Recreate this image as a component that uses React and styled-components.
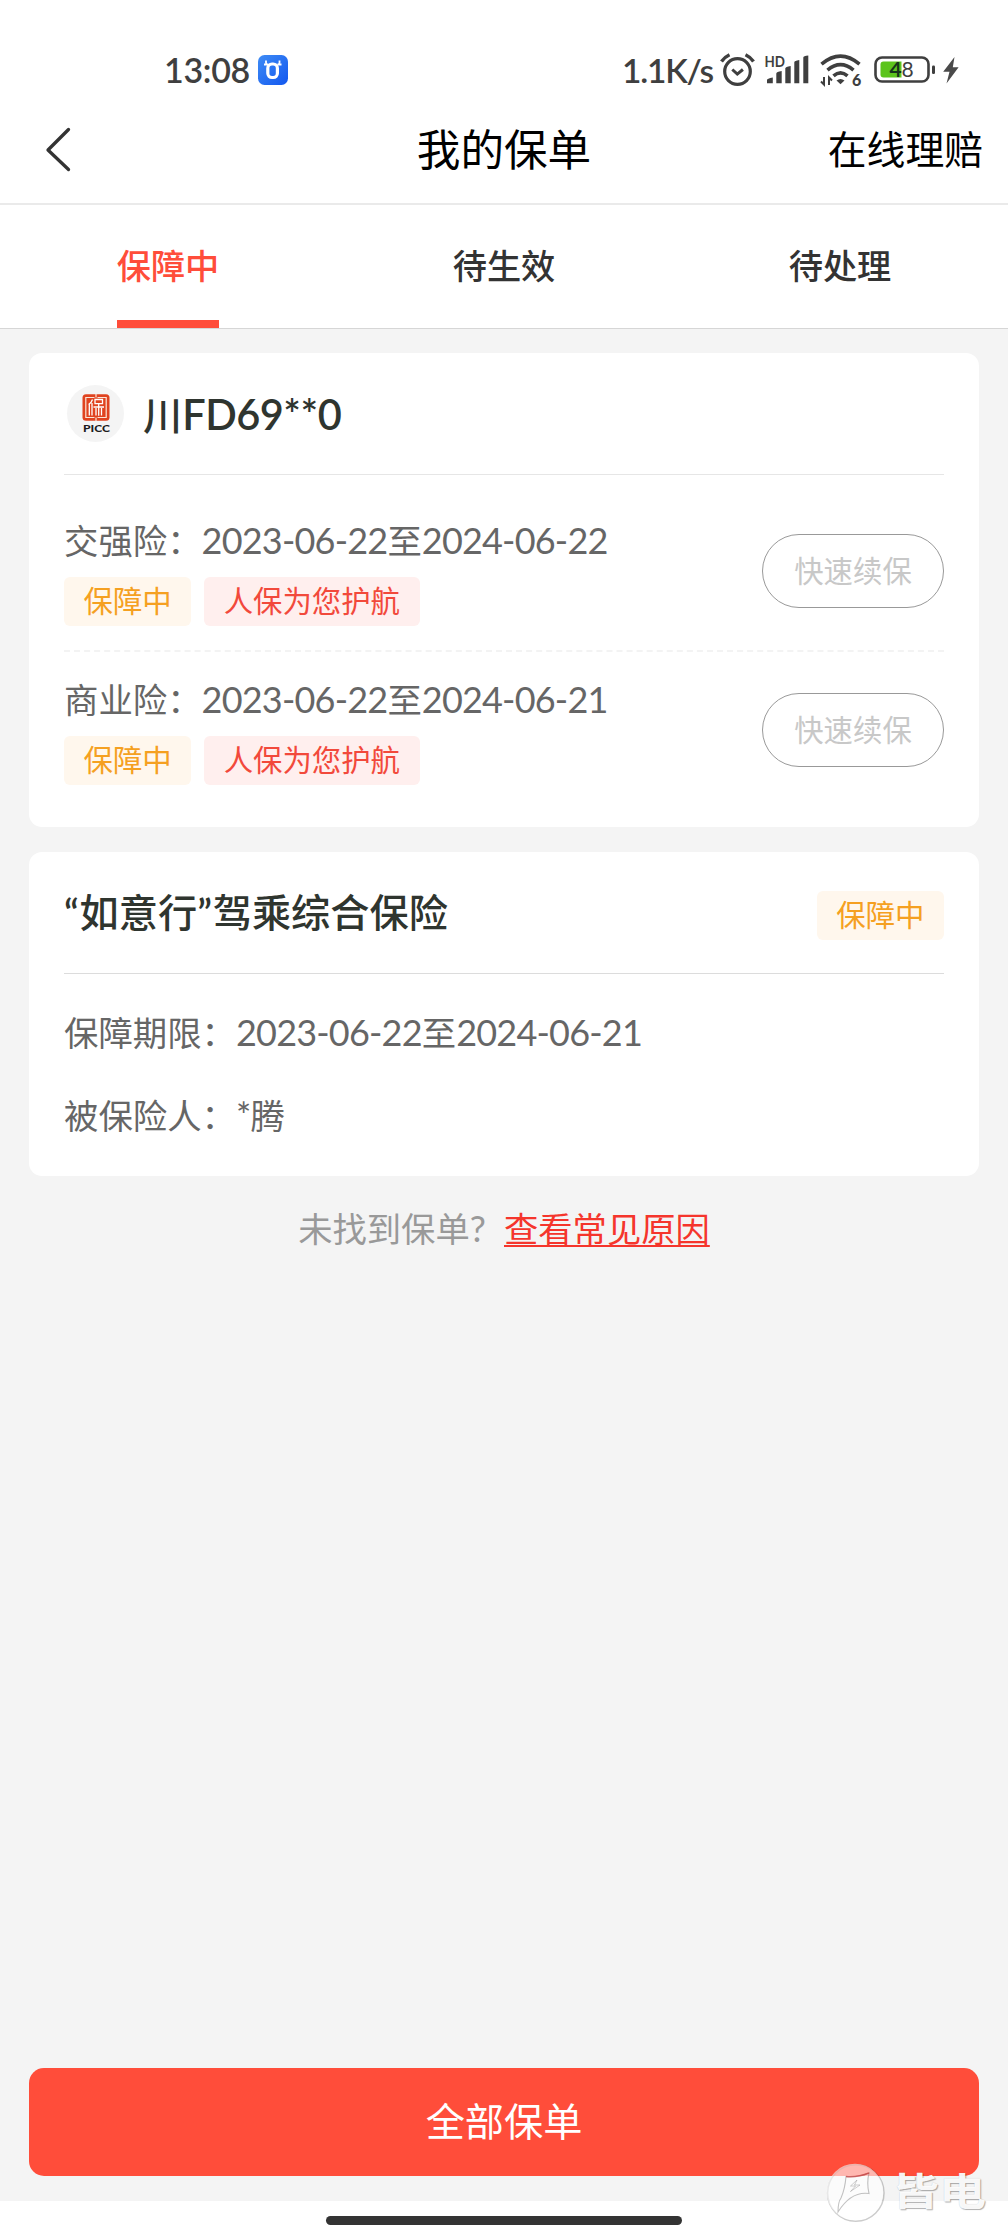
import { useState } from 'react';
import styled, { createGlobalStyle } from 'styled-components';

const TABS = ['保障中', '待生效', '待处理'];

const POLICIES = [
  { name: '交强险', start: '2023-06-22', end: '2024-06-22' },
  { name: '商业险', start: '2023-06-22', end: '2024-06-21' },
];

const AppBadge = () => (
  <svg width="30" height="30" viewBox="0 0 30 30">
    <defs>
      <linearGradient id="badge" x1="0" y1="0" x2="1" y2="1">
        <stop offset="0" stopColor="#3f8cf5" />
        <stop offset="1" stopColor="#1257ef" />
      </linearGradient>
    </defs>
    <rect width="30" height="30" rx="6.5" fill="url(#badge)" />
    <rect x="9.8" y="9" width="9.6" height="13.5" rx="4.2" fill="none" stroke="#fff" strokeWidth="3.2" />
    <path d="M8 5.500v2.200q0 1.600 2 2M21.500 5.500v2.200q0 1.600-2 2M6 9.500h4M19.500 9.500h4" fill="none" stroke="#fff" strokeWidth="1.8" />
  </svg>
);

const AlarmIcon = () => (
  <svg width="36" height="34" viewBox="0 0 36 34" fill="none" stroke="#3f3f3f">
    <circle cx="17.5" cy="18.5" r="12.8" strokeWidth="3.2" />
    <path d="M12.3 16.500l5 4.600 5.600-4.600" strokeWidth="3" />
    <path d="M1.500 8.500q3-4.500 8-6.800M33.500 8.500q-3-4.500-8-6.800" strokeWidth="3.4" />
  </svg>
);

const SignalIcon = () => (
  <svg width="46" height="34" viewBox="0 0 46 34" fill="#3f3f3f">
    <text x="0.5" y="13.5" fontFamily="Lato, sans-serif" fontWeight="700" fontSize="14.5" textLength="20.5" lengthAdjust="spacingAndGlyphs">HD</text>
    <path d="M3 30.300v-3.200q0-1.600 5.800-2.600v5.800zM12.300 30.300V20.500q0-1.600 5.400-2.400v12.200zM21.300 30.300V15.300q0-1.600 5.400-2.400v17.400zM30.300 30.300V9.200q0-1.400 5-2.200v23.300zM39.300 30.300V4.400q0-1.400 5-2v27.900z" />
  </svg>
);

const WifiIcon = () => (
  <svg width="42" height="34" viewBox="0 0 42 34" fill="none" stroke="#3f3f3f" strokeWidth="3.6">
    <path d="M1.500 11.200q19-16 38 0M7.500 17.200q13-11 26 0M13.500 22.800q7-6 14 0" />
    <path d="M16.500 27.500q4-3 8 0l-4 3.800z" fill="#3f3f3f" stroke="none" />
    <path d="M4 24v7.500l-3-3M9 32v-7.500l3 3" strokeWidth="2" />
    <text x="32" y="33" fontFamily="Lato, sans-serif" fontWeight="900" fontSize="16" fill="#3f3f3f" stroke="none">6</text>
  </svg>
);

const BatteryIcon = () => (
  <svg width="64" height="30" viewBox="0 0 64 30">
    <rect x="2.5" y="2.5" width="53" height="24" rx="6.5" fill="none" stroke="#3f3f3f" strokeWidth="2.6" />
    <path d="M10.500 6.500h18v16h-18q-3 0-3-3v-10q0-3 3-3z" fill="#5cc41c" />
    <rect x="59" y="10.500" width="3" height="8.5" rx="1.2" fill="#3f3f3f" />
    <text x="16.5" y="22" fontFamily="Lato, sans-serif" fontSize="21" fontWeight="700" fill="#16351a">4</text>
    <text x="28.5" y="22" fontFamily="Lato, sans-serif" fontSize="21" fill="#3f3f3f">8</text>
  </svg>
);

const BoltIcon = () => (
  <svg width="16" height="28" viewBox="0 0 16 28" fill="#4a4a4a">
    <path d="M11.500 1L.2 15.800h6.300L3.500 27.500 15.600 11.300H9.800z" />
  </svg>
);

const BackIcon = () => (
  <svg width="30" height="46" viewBox="0 0 30 46" fill="none" stroke="#333" strokeWidth="3.3" strokeLinecap="round" strokeLinejoin="round">
    <path d="M24.500 3.500L4 24l20.500 19.500" />
  </svg>
);

const PiccLogo = () => (
  <svg width="57" height="57" viewBox="0 0 57 57">
    <circle cx="28.5" cy="28.5" r="28.5" fill="#f4f4f4" />
    <rect x="15.5" y="9.3" width="27" height="26.4" rx="3.5" fill="#e0431f" />
    <path d="M27.500 12.500H18.800v20h8.700M30.500 12.500h8.700v20h-8.700M29 9v3.500M29 32.500V36" fill="none" stroke="#fbe5d8" strokeWidth="1.2" />
    <path d="M25.500 14.500q-1 3.500-4 5M22.300 19v11.500M25 18v12.500M28 14.500h7.500v4.200H28zM26.500 22H37M31.700 18.700v12M29 23v7.500M34.500 23v7.500" fill="none" stroke="#fff" strokeWidth="1.3" />
    <text x="16" y="46.8" fontFamily="Lato, sans-serif" fontWeight="900" fontSize="10.2" fill="#1c1c1c" textLength="27" lengthAdjust="spacingAndGlyphs">PICC</text>
  </svg>
);

const WatermarkLogo = () => (
  <svg width="60" height="60" viewBox="0 0 60 60">
    <circle cx="30.8" cy="31" r="28.2" fill="none" stroke="#000" strokeOpacity="0.2" strokeWidth="1.5" />
    <circle cx="30" cy="30" r="28.3" fill="#fff" fillOpacity="0.6" />
    <path d="M21 14.500q12 1 23-3.500-2.500 10 0 20.500Q26 29 13 50q0-10 3-14 4-9 5-21.500z" fill="#fff" fillOpacity="0.3" stroke="#777" strokeOpacity="0.45" strokeWidth="1.1" />
    <path d="M21 14.500q12 1 23-3.500" fill="none" stroke="#c22" strokeOpacity="0.6" strokeWidth="1.5" />
    <path d="M32 18l-6.500 6h5l-5 5.500 9.500-6.500h-5.500z" fill="none" stroke="#888" strokeOpacity="0.4" />
  </svg>
);

const App = () => {
  const [activeTab, setActiveTab] = useState(0);

  return (
    <Page>
      <GlobalStyle />
      <StatusBar>
        <StatusGroup>
          <StatusText>13:08</StatusText>
          <AppBadge />
        </StatusGroup>
        <StatusGroup>
          <SpeedText>1.1K/s</SpeedText>
          <StatusIcons>
            <AlarmIcon />
            <SignalIcon />
            <WifiIcon />
            <BatteryIcon />
            <BoltIcon />
          </StatusIcons>
        </StatusGroup>
      </StatusBar>

      <Header>
        <BackButton><BackIcon /></BackButton>
        <Title>我的保单</Title>
        <HeaderLink>在线理赔</HeaderLink>
      </Header>

      <TabBar>
        {TABS.map((tab, index) => (
          <TabItem key={tab} onClick={() => setActiveTab(index)}>
            <TabLabel $active={index === activeTab}>{tab}</TabLabel>
          </TabItem>
        ))}
      </TabBar>

      <Content>
        <Card $height={474}>
          <CardHeader>
            <Plate>
              <PiccLogo />
              <CardTitle>川<PlateNumber>FD69**0</PlateNumber></CardTitle>
            </Plate>
          </CardHeader>
          {POLICIES.map((policy) => (
            <PolicyRow key={policy.name}>
              <div>
                <InfoText>
                  {policy.name}：<Num>{policy.start}</Num>至<Num>{policy.end}</Num>
                </InfoText>
                <TagRow>
                  <Tag>保障中</Tag>
                  <Tag $red>人保为您护航</Tag>
                </TagRow>
              </div>
              <RenewButton>快速续保</RenewButton>
            </PolicyRow>
          ))}
        </Card>

        <Card $height={324}>
          <CardHeader $dark>
            <ProductTitle><Quote>“</Quote>如意行<Quote>”</Quote>驾乘综合保险</ProductTitle>
            <Tag>保障中</Tag>
          </CardHeader>
          <Details>
            <InfoText>保障期限：<Num>2023-06-22</Num>至<Num>2024-06-21</Num></InfoText>
            <InfoText>被保险人：<Num>*</Num>腾</InfoText>
          </Details>
        </Card>

        <Hint>
          <span>未找到保单<Num>?</Num></span>
          <HintLink>查看常见原因</HintLink>
        </Hint>
      </Content>

      <Footer>
        <AllButton>全部保单</AllButton>
      </Footer>
      <HomeArea><HomeBar /></HomeArea>

      <Watermark>
        <WatermarkLogo />
        <WatermarkText>皆电</WatermarkText>
      </Watermark>
    </Page>
  );
};

const GlobalStyle = createGlobalStyle`
  * { box-sizing: border-box; }
  body { margin: 0; background: #fff; }
  button { font-family: inherit; background: none; border: none; padding: 0; cursor: pointer; }
  svg { display: block; flex: none; overflow: visible; }
`;

const Page = styled.div`
  position: relative;
  display: flex;
  flex-direction: column;
  width: 1008px;
  height: 2240px;
  overflow: hidden;
  background: #fff;
  font-family: 'Noto Sans CJK SC', sans-serif;
  white-space: nowrap;
`;

const StatusBar = styled.div`
  display: flex;
  justify-content: space-between;
  align-items: center;
  height: 96px;
  padding: 44px 49px 0 164px;
`;

const StatusGroup = styled.div` display: flex; align-items: center; gap: 8px; height: 52px; `;

const StatusText = styled.span`
  width: 86px;
  font: 600 34px/52px Lato, sans-serif;
  letter-spacing: -0.3px;
  color: #3f3f3f;
`;

const SpeedText = styled(StatusText)`
  width: 90px;
  font-size: 33.5px;
  letter-spacing: -1.2px;
`;

const StatusIcons = styled.div`
  display: grid;
  grid-template-columns: 44px 56px 53px 70px 16px;
  align-items: center;
`;

const Header = styled.header`
  display: grid;
  grid-template-columns: 1fr auto 1fr;
  align-items: center;
  height: 109px;
  padding: 0 25px 2px 44px;
  border-bottom: 2px solid #eaeaea;
  color: #000;
`;

const BackButton = styled.button` width: 30px; `;

const Title = styled.h1`
  margin: 0 0 4px -19px;
  font-size: 43.6px;
  font-weight: 400;
  line-height: 60px;
`;

const HeaderLink = styled.button`
  justify-self: end;
  margin-bottom: 4px;
  font-size: 38.8px;
  line-height: 60px;
  color: #000;
`;

const TabBar = styled.nav`
  display: grid;
  grid-template-columns: repeat(3, 1fr);
  height: 124px;
  border-bottom: 1px solid #d6d6d6;
`;

const TabItem = styled.button` display: flex; justify-content: center; `;

const TabLabel = styled.span`
  height: 123px;
  border-bottom: 8px solid ${({ $active }) => ($active ? '#ff4d3a' : 'transparent')};
  font-size: 34.2px;
  font-weight: 500;
  line-height: 119px;
  color: ${({ $active }) => ($active ? '#ff4d3a' : '#333')};
`;

const Content = styled.main`
  flex: 1;
  display: flex;
  flex-direction: column;
  gap: 25px;
  padding: 24px 29px 0;
  background: #f4f4f4;
`;

const Card = styled.section`
  height: ${({ $height }) => $height}px;
  padding: 0 35px;
  border-radius: 13px;
  background: #fff;
`;

const CardHeader = styled.div`
  display: flex;
  align-items: center;
  justify-content: space-between;
  height: 122px;
  padding-top: 6px;
  border-bottom: 1px solid ${({ $dark }) => ($dark ? '#dcdcdc' : '#e6e6e6')};
`;

const Plate = styled.div` display: flex; align-items: center; gap: 19px; padding: 0 0 6px 3px; `;

const CardTitle = styled.h2`
  margin: 0;
  font-size: 39.2px;
  font-weight: 500;
  line-height: 56px;
  color: #2f352f;
`;

const ProductTitle = styled(CardTitle)` margin-bottom: 10px; `;

const Quote = styled.span` font-family: Lato, sans-serif; font-weight: 600; letter-spacing: 0.8px; `;

const PlateNumber = styled.span`
  font-family: Lato, sans-serif;
  font-size: 41.5px;
  font-weight: 600;
  letter-spacing: -0.5px;
`;

const PolicyRow = styled.div`
  display: flex;
  justify-content: space-between;
  align-items: flex-start;
  height: 175px;
  padding-top: 38px;

  & + & {
    height: 158px;
    padding-top: 20px;
    border-top: 2px dashed #f3f3f3;
  }
`;

const InfoText = styled.div`
  font-size: 34.4px;
  line-height: 52px;
  color: #666;
`;

const Num = styled.span` font-family: Lato, sans-serif; font-size: 36px; letter-spacing: -0.8px; `;
const TagRow = styled.div` display: flex; gap: 13px; margin-top: 11px; `;

const Tag = styled.span`
  height: 49px;
  padding: 0 19.5px;
  border-radius: 6px;
  font-size: 29.4px;
  line-height: 45px;
  color: ${({ $red }) => ($red ? '#f2493b' : '#f5a021')};
  background: ${({ $red }) => ($red ? '#ffefee' : '#fff7ed')};
`;

const RenewButton = styled.button`
  width: 182px;
  height: 74px;
  margin-top: 21px;
  padding-bottom: 5px;
  border: 1px solid #999;
  border-radius: 37px;
  font-size: 29.4px;
  color: #c8c8c8;
`;

const Details = styled.div`
  display: flex;
  flex-direction: column;
  gap: 30px;
  padding-top: 31px;
`;

const Hint = styled.div`
  display: flex;
  justify-content: center;
  gap: 19px;
  font-size: 34.3px;
  line-height: 52px;
  color: #999;
`;

const HintLink = styled.a`
  color: #f5352c;
  text-decoration: underline;
  text-decoration-thickness: 2px;
  text-underline-offset: 3px;
`;

const Footer = styled.footer` padding: 0 29px 25px; background: #f4f4f4; `;

const AllButton = styled.button`
  display: block;
  width: 950px;
  height: 108px;
  padding-bottom: 6px;
  border-radius: 15px;
  background: #ff4d3a;
  font-size: 39.2px;
  color: #fff;
`;

const HomeArea = styled.div` display: flex; justify-content: center; height: 39px; padding-top: 15px; `;
const HomeBar = styled.div` width: 356px; height: 9px; border-radius: 5px; background: #333; `;

const Watermark = styled.div`
  position: absolute;
  left: 825px;
  top: 2159px;
  display: flex;
  align-items: center;
  gap: 7px;
`;

const WatermarkText = styled.span`
  margin-bottom: 6px;
  font-size: 47px;
  font-weight: 700;
  line-height: 60px;
  color: rgba(255, 255, 255, 0.95);
  text-shadow: 1px 1px 1px rgba(0, 0, 0, 0.3), 0 0 1px rgba(0, 0, 0, 0.2);
  transform: scaleY(0.8);
`;

export default App;
